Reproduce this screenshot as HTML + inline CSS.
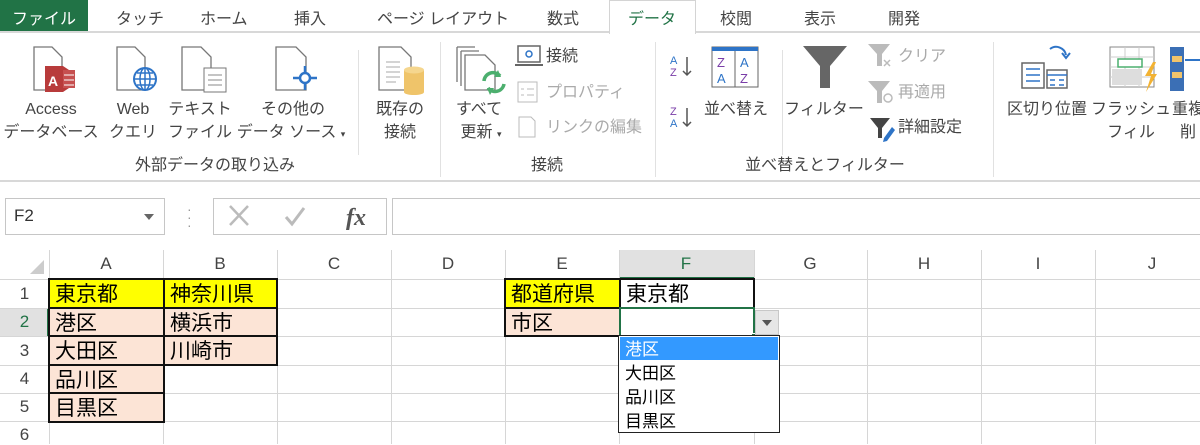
<!DOCTYPE html>
<html><head><meta charset="utf-8">
<style>
*{margin:0;padding:0;box-sizing:border-box}
body{width:1200px;height:444px;overflow:hidden;background:#fff;font-family:"Liberation Sans","Noto Sans CJK JP",sans-serif;position:relative;color:#444}
.a{position:absolute;white-space:nowrap}
.t{font-size:16px;color:#444;line-height:20px}
.c{transform:translateX(-50%)}
.g{color:#aaa}
.tab{font-size:16px;top:5px;color:#444}
.sep{position:absolute;width:1px;background:#e1e1e1}
.vl{position:absolute;top:250px;height:194px;width:1px;background:#d6d6d6}
.hl{position:absolute;left:0;width:1200px;height:1px;background:#d6d6d6}
.cell{position:absolute;font-family:"Noto Sans CJK JP",sans-serif;font-size:21px;line-height:26px;color:#000;padding-left:5px;border:2px solid #111}
.ch{position:absolute;top:254px;font-size:17px;color:#444;transform:translateX(-50%)}
.rh{position:absolute;left:0;width:49px;text-align:center;font-size:17px;color:#444}
</style></head><body>
<!-- tab bar -->
<div class="a" style="left:0;top:0;width:88px;height:32px;background:#217346"></div>
<div class="a tab" style="left:12px;color:#fff">ファイル</div>
<div class="a" style="left:0;top:31px;width:1200px;height:2px;background:#d8d8d8"></div>
<div class="a tab" style="left:116px">タッチ</div>
<div class="a tab" style="left:200px">ホーム</div>
<div class="a tab" style="left:294px">挿入</div>
<div class="a tab" style="left:377px">ページ レイアウト</div>
<div class="a tab" style="left:547px">数式</div>
<div class="a" style="left:609px;top:0;width:87px;height:34px;background:#fff;border:1px solid #d4d4d4;border-bottom:none"></div>
<div class="a tab" style="left:628px;color:#217346">データ</div>
<div class="a tab" style="left:720px">校閲</div>
<div class="a tab" style="left:804px">表示</div>
<div class="a tab" style="left:888px">開発</div>
<!-- ribbon -->
<div class="a" style="left:0;top:180px;width:1200px;height:2px;background:#d8d8d8"></div>
<svg class="a" style="left:0;top:0" width="1200" height="180">
 <g fill="#fff" stroke="#777" stroke-width="1.3">
  <path d="M34 47h18l10 10v33H34z"/><path d="M117 47h18l10 10v33h-28z"/><path d="M182 47h19l10 10v33h-29z"/>
  <path d="M276 47h20l10 10v33h-30z"/><path d="M379 47h22l10 10v33h-32z"/>
  <path d="M465 55h20l10 10v25h-30z"/><path d="M461 51v35M465 51h-4M457 47v35M457 47h18M461 51h18"/>
 </g>
 <path d="M45 66h18l6 4v18l-6 4H45z" fill="#b83b3b"/><path d="M63 70h12v18H63z" fill="#c65050"/><path d="M64 75h10M64 80h10M64 85h10" stroke="#fff"/><text x="48" y="86" font-size="14" fill="#fff" font-family="Liberation Sans" font-weight="bold">A</text>
 <circle cx="145" cy="79" r="11" fill="#fff" stroke="#2e74c7" stroke-width="2"/><path d="M134 79h22M145 68v22M137 73h16M137 85h16" stroke="#2e74c7" stroke-width="1.5"/><ellipse cx="145" cy="79" rx="5" ry="11" fill="none" stroke="#2e74c7" stroke-width="1.5"/>
 <rect x="204" y="68" width="22" height="24" fill="#fff" stroke="#777"/><path d="M208 75h14M208 80h14M208 85h14" stroke="#888"/>
 <circle cx="305" cy="78" r="5" fill="#fff" stroke="#2e74c7" stroke-width="2.5"/><path d="M305 66v7M305 83v7M293 78h7M310 78h7" stroke="#2e74c7" stroke-width="2.5"/>
 <path d="M386 62h14M386 67h14M386 72h14M386 77h14M386 82h10" stroke="#aaa"/>
 <path d="M404 70v22c0 4 20 4 20 0V70z" fill="#efc46a"/><ellipse cx="414" cy="70" rx="10" ry="3.5" fill="#f5d68e"/>
 <path d="M484 81a9 9 0 0 1 16-5M504 84a9 9 0 0 1-16 4" stroke="#4caf6e" stroke-width="3.5" fill="none"/><path d="M498 70l3 7-7 0z" fill="#4caf6e"/><path d="M490 95l-3-7 7 0z" fill="#4caf6e"/>
 <rect x="518" y="46" width="22" height="16" fill="#fff" stroke="#666" stroke-width="1.5"/><path d="M515 65h28" stroke="#666" stroke-width="2"/><circle cx="529" cy="54" r="3" fill="none" stroke="#2e74c7" stroke-width="1.5"/>
 <rect x="518" y="82" width="19" height="20" fill="#fff" stroke="#bbb"/><path d="M521 89h3M527 89h7M521 95h3M527 95h7" stroke="#bbb"/>
 <path d="M519 117h12l4 4v16h-16z" fill="#fff" stroke="#bbb"/>
 <text x="670" y="64" font-size="11" fill="#2e74c7" font-family="Liberation Sans">A</text><text x="670" y="76" font-size="11" fill="#7a3ea8" font-family="Liberation Sans">Z</text><path d="M687 57v18m-4-4 4 4 4-4" stroke="#555" fill="none" stroke-width="1.5"/>
 <text x="670" y="115" font-size="11" fill="#7a3ea8" font-family="Liberation Sans">Z</text><text x="670" y="127" font-size="11" fill="#2e74c7" font-family="Liberation Sans">A</text><path d="M687 108v18m-4-4 4 4 4-4" stroke="#555" fill="none" stroke-width="1.5"/>
 <rect x="712" y="47" width="46" height="40" fill="#fff" stroke="#666"/><rect x="712" y="47" width="46" height="4" fill="#2e74c7"/><path d="M735 51v36" stroke="#666"/>
 <text x="717" y="67" font-size="13" fill="#7a3ea8" font-family="Liberation Sans">Z</text><text x="717" y="83" font-size="13" fill="#2e74c7" font-family="Liberation Sans">A</text><text x="740" y="67" font-size="13" fill="#2e74c7" font-family="Liberation Sans">A</text><text x="740" y="83" font-size="13" fill="#7a3ea8" font-family="Liberation Sans">Z</text>
 <path d="M803 46h44l-17 20v22h-10V66z" fill="#666"/>
 <path d="M868 44h22l-8 10v12h-5V54z" fill="#bbb"/><path d="M884 60l6 6M890 60l-6 6" stroke="#bbb" stroke-width="1.5"/>
 <path d="M868 81h22l-8 10v12h-5V91z" fill="#bbb"/><circle cx="888" cy="98" r="4" fill="none" stroke="#bbb" stroke-width="1.5"/>
 <path d="M870 118h20l-8 10v10h-4V128z" fill="#444"/><path d="M884 138l8-11 3 3-8 11-4 1z" fill="#2e74c7"/>
 <path d="M1050 49a10 10 0 0 1 16 6m-4-2 4 5 4-5" stroke="#2e74c7" stroke-width="2" fill="none"/>
 <rect x="1022" y="63" width="22" height="25" fill="#fff" stroke="#666" stroke-width="1.5"/><path d="M1026 69h14M1026 75h14M1026 81h14" stroke="#2e74c7" stroke-width="1.5"/>
 <rect x="1047" y="70" width="20" height="18" fill="#fff" stroke="#666" stroke-width="1.5"/><path d="M1047 75h20M1050 80h5M1059 80h5M1050 85h5M1059 85h5" stroke="#2e74c7" stroke-width="1.5"/>
 <rect x="1110" y="47" width="44" height="40" fill="#fff" stroke="#888"/><path d="M1110 57h44M1110 67h44M1110 77h44M1125 47v40M1139 47v40" stroke="#ccc"/><rect x="1118" y="59" width="24" height="8" fill="#fff" stroke="#4caf6e" stroke-width="1.5"/><rect x="1112" y="69" width="30" height="16" fill="#ddd"/>
 <path d="M1153 62l-8 14h6l-5 16 11-18h-6l5-12z" fill="#f2b233"/>
 <rect x="1170" y="47" width="14" height="44" fill="#3b6fb5"/><rect x="1172" y="56" width="10" height="6" fill="#f1c46b"/><rect x="1172" y="72" width="10" height="6" fill="#f1c46b"/><path d="M1185 60h15" stroke="#2e74c7" stroke-width="2"/>
</svg>
<div class="sep" style="left:358px;top:50px;height:105px"></div>
<div class="sep" style="left:440px;top:42px;height:135px"></div>
<div class="sep" style="left:655px;top:42px;height:135px"></div>
<div class="sep" style="left:782px;top:50px;height:105px"></div>
<div class="sep" style="left:993px;top:42px;height:135px"></div>
<div class="a t c" style="left:51px;top:100px">Access</div><div class="a t c" style="left:51px;top:123px">データベース</div>
<div class="a t c" style="left:133px;top:100px">Web</div><div class="a t c" style="left:133px;top:123px">クエリ</div>
<div class="a t c" style="left:200px;top:100px">テキスト</div><div class="a t c" style="left:200px;top:123px">ファイル</div>
<div class="a t c" style="left:293px;top:100px">その他の</div><div class="a t c" style="left:291px;top:123px">データ ソース <span style="font-size:9px">▾</span></div>
<div class="a t c" style="left:400px;top:100px">既存の</div><div class="a t c" style="left:400px;top:123px">接続</div>
<div class="a t c" style="left:215px;top:156px">外部データの取り込み</div>
<div class="a t c" style="left:479px;top:100px">すべて</div><div class="a t c" style="left:481px;top:123px">更新 <span style="font-size:9px">▾</span></div>
<div class="a t" style="left:546px;top:47px">接続</div>
<div class="a t g" style="left:546px;top:83px">プロパティ</div>
<div class="a t g" style="left:546px;top:118px">リンクの編集</div>
<div class="a t c" style="left:547px;top:156px">接続</div>
<div class="a t c" style="left:736px;top:100px">並べ替え</div>
<div class="a t c" style="left:824px;top:100px">フィルター</div>
<div class="a t g" style="left:898px;top:47px">クリア</div>
<div class="a t g" style="left:898px;top:83px">再適用</div>
<div class="a t" style="left:898px;top:118px">詳細設定</div>
<div class="a t c" style="left:825px;top:156px">並べ替えとフィルター</div>
<div class="a t c" style="left:1047px;top:100px">区切り位置</div>
<div class="a t c" style="left:1131px;top:100px">フラッシュ</div><div class="a t c" style="left:1131px;top:123px">フィル</div>
<div class="a t" style="left:1172px;top:100px">重複</div><div class="a t" style="left:1180px;top:123px">削</div>
<!-- formula bar -->
<div class="a" style="left:5px;top:198px;width:160px;height:37px;border:1px solid #c6c6c6"></div>
<div class="a" style="left:14px;top:206px;font-size:17px;color:#333">F2</div>
<div class="a" style="left:144px;top:214px;width:0;height:0;border:5px solid transparent;border-top:6px solid #666"></div>
<div class="a" style="left:187px;top:205px;color:#999;font-size:14px;line-height:8px">·<br>·<br>·</div>
<div class="a" style="left:213px;top:198px;width:174px;height:37px;border:1px solid #c6c6c6"></div>
<svg class="a" style="left:213px;top:198px" width="174" height="37"><path d="M17 8l18 19M35 8 17 27" stroke="#bbb" stroke-width="2.5"/><path d="M73 19l6 7 12-16" stroke="#bbb" stroke-width="3" fill="none"/><text x="133" y="27" font-family="Liberation Serif" font-style="italic" font-weight="bold" font-size="24" fill="#555">fx</text></svg>
<div class="a" style="left:392px;top:198px;width:820px;height:37px;border:1px solid #c6c6c6"></div>
<!-- grid -->
<div class="a" style="left:619px;top:250px;width:135px;height:29px;background:#e1e1e1;border-bottom:2px solid #217346"></div>
<div class="a" style="left:0;top:308px;width:49px;height:28px;background:#e1e1e1;border-right:2px solid #217346"></div>
<svg class="a" style="left:28px;top:258px" width="18" height="18"><path d="M16 2v14H2z" fill="#ccc"/></svg>
<div class="hl" style="top:279px"></div><div class="hl" style="top:308px"></div><div class="hl" style="top:336px"></div><div class="hl" style="top:365px"></div><div class="hl" style="top:393px"></div><div class="hl" style="top:421px"></div>
<div class="vl" style="left:49px"></div><div class="vl" style="left:163px"></div><div class="vl" style="left:277px"></div><div class="vl" style="left:391px"></div><div class="vl" style="left:505px"></div><div class="vl" style="left:619px"></div><div class="vl" style="left:754px"></div><div class="vl" style="left:867px"></div><div class="vl" style="left:981px"></div><div class="vl" style="left:1095px"></div>
<div class="ch" style="left:106px">A</div><div class="ch" style="left:220px">B</div><div class="ch" style="left:334px">C</div><div class="ch" style="left:448px">D</div><div class="ch" style="left:562px">E</div><div class="ch" style="left:686px;color:#217346">F</div><div class="ch" style="left:810px">G</div><div class="ch" style="left:924px">H</div><div class="ch" style="left:1038px">I</div><div class="ch" style="left:1152px">J</div>
<div class="rh" style="top:284px">1</div><div class="rh" style="top:312px;color:#217346">2</div><div class="rh" style="top:341px">3</div><div class="rh" style="top:369px">4</div><div class="rh" style="top:397px">5</div><div class="rh" style="top:425px">6</div>
<div class="cell" style="left:48px;top:278px;width:117px;height:31px;background:#ffff00">東京都</div>
<div class="cell" style="left:163px;top:278px;width:115px;height:31px;background:#ffff00">神奈川県</div>
<div class="cell" style="left:48px;top:307px;width:117px;height:30px;background:#fce4d6">港区</div>
<div class="cell" style="left:163px;top:307px;width:115px;height:30px;background:#fce4d6">横浜市</div>
<div class="cell" style="left:48px;top:335px;width:117px;height:31px;background:#fce4d6">大田区</div>
<div class="cell" style="left:163px;top:335px;width:115px;height:31px;background:#fce4d6">川崎市</div>
<div class="cell" style="left:48px;top:364px;width:117px;height:30px;background:#fce4d6">品川区</div>
<div class="cell" style="left:48px;top:392px;width:117px;height:31px;background:#fce4d6">目黒区</div>
<div class="cell" style="left:504px;top:278px;width:117px;height:31px;background:#ffff00">都道府県</div>
<div class="cell" style="left:504px;top:307px;width:117px;height:30px;background:#fce4d6">市区</div>
<div class="cell" style="left:619px;top:278px;width:136px;height:31px;background:#fff">東京都</div>
<div class="a" style="left:619px;top:307px;width:136px;height:30px;border:2px solid #217346;background:#fff"></div>
<div class="a" style="left:751px;top:333px;width:6px;height:6px;background:#217346;border:1px solid #fff"></div>
<div class="a" style="left:755px;top:310px;width:24px;height:25px;background:#e6e6e6;border:1px solid #c8c8c8"></div>
<div class="a" style="left:762px;top:320px;width:0;height:0;border:5px solid transparent;border-top:6px solid #555"></div>
<div class="a" style="left:618px;top:335px;width:162px;height:98px;background:#fff;border:1px solid #222"></div>
<div class="a" style="left:620px;top:337px;width:158px;height:23px;background:#3399ff"></div>
<div class="a" style="left:625px;top:336px;font-family:'Noto Sans CJK JP',sans-serif;font-size:17px;line-height:24px;color:#000">
<div style="color:#fff">港区</div><div>大田区</div><div>品川区</div><div>目黒区</div></div>
</body></html>
